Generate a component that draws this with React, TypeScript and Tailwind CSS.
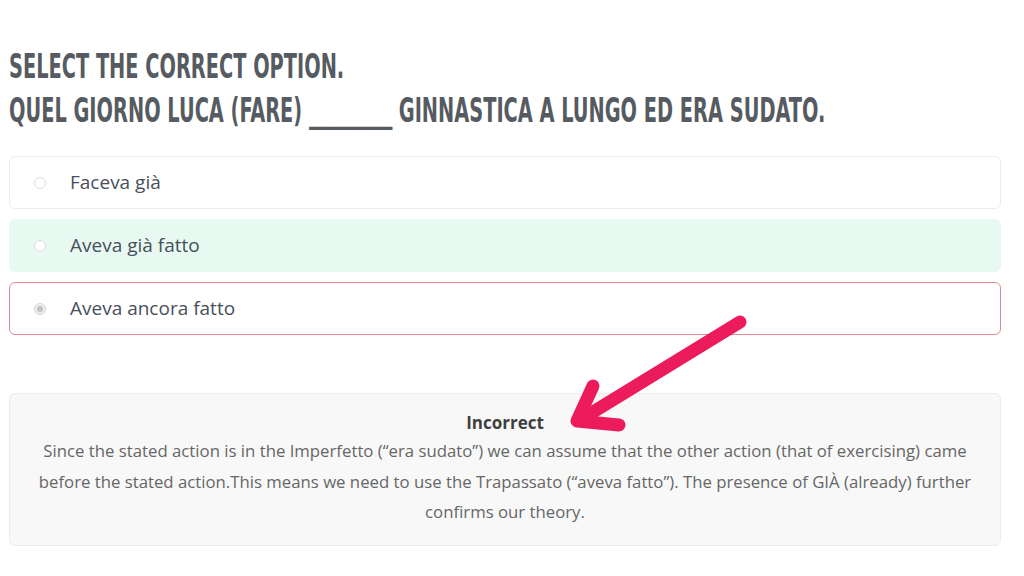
import React from "react";

const options = [
  { label: "Faceva già", state: "normal" },
  { label: "Aveva già fatto", state: "correct" },
  { label: "Aveva ancora fatto", state: "wrong" },
];

export default function App() {
  return (
    <div className="relative w-[1024px] h-[576px] bg-white overflow-hidden" style={{ fontFamily: '"Open Sans", sans-serif' }}>
      <div className="ml-[9px] w-[992px] pt-[44px]">
        <h1
          className="text-[#565b62] font-bold uppercase text-[34px] leading-[44px] whitespace-nowrap origin-left scale-x-[0.633]"
          style={{ fontFamily: '"DejaVu Sans Condensed", sans-serif' }}
        >
          <div>SELECT THE CORRECT OPTION.</div>
          <div>
            QUEL GIORNO LUCA (FARE) <span className="tracking-[-0.7px]">_________</span> GINNASTICA A LUNGO ED ERA SUDATO.
          </div>
        </h1>
        <div className="mt-[24px] flex flex-col gap-[10px]">
          {options.map((o) => (
            <div
              key={o.label}
              className={
                "h-[53px] rounded-[6px] border flex items-center " +
                (o.state === "correct"
                  ? "bg-[#e8f9f2] border-[#e8f9f2]"
                  : o.state === "wrong"
                  ? "bg-white border-[#e38791]"
                  : "bg-white border-[#ececec]")
              }
            >
              <div className="w-[60px] flex justify-center">
                <span
                  className={
                    "w-[12px] h-[12px] rounded-full border flex items-center justify-center " +
                    (o.state === "wrong" ? "border-[#d6d6d6] bg-[#ededed]" : "border-[#dcdcdc] bg-white")
                  }
                >
                  {o.state === "wrong" && <span className="w-[6px] h-[6px] rounded-full bg-[#c4c4c4]" />}
                </span>
              </div>
              <span className="text-[19px] text-[#48505b]">{o.label}</span>
            </div>
          ))}
        </div>
        <div className="mt-[58px] h-[153px] rounded-[6px] border border-[#ececec] bg-[#f8f8f8] flex flex-col items-center pt-[16px] px-[20px] text-center">
          <div className="text-[17px] font-bold text-[#3f3f3f] leading-[26px]">Incorrect</div>
          <p className="text-[16.75px] text-[#666666] leading-[30.5px]">
            Since the stated action is in the Imperfetto (“era sudato”) we can assume that the other action (that of exercising) came before the stated action.This means we need to use the Trapassato (“aveva fatto”). The presence of GIÀ (already) further confirms our theory.
          </p>
        </div>
      </div>
      <svg className="absolute left-0 top-0 pointer-events-none" width="1024" height="576" viewBox="0 0 1024 576">
        <g stroke="#ec1c5c" strokeWidth="13" strokeLinecap="round" strokeLinejoin="round" fill="none">
          <path d="M740 322 L580 420" />
          <path d="M593 386 L577 421 L619 425" />
        </g>
      </svg>
    </div>
  );
}
